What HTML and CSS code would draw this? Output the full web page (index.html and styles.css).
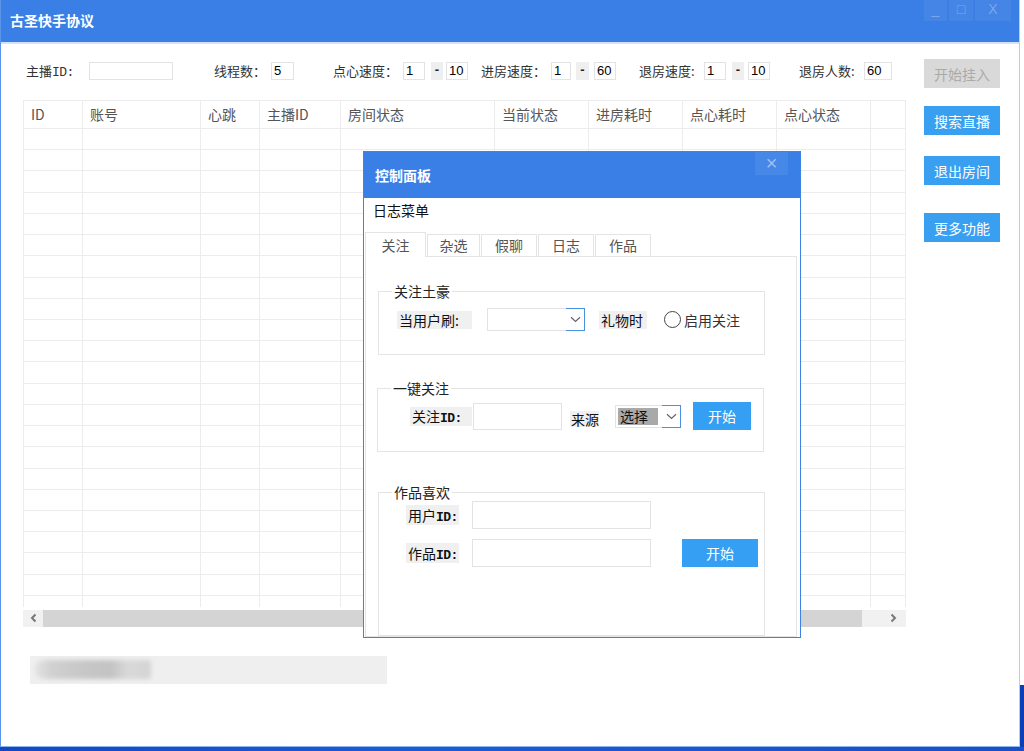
FILE: index.html
```html
<!DOCTYPE html>
<html lang="zh-CN">
<head>
<meta charset="utf-8">
<title>古圣快手协议</title>
<link rel="stylesheet" href="styles.css">
</head>
<body>
<div class="desktop">
  <div class="window">
    <div class="titlebar">
      <span class="title">古圣快手协议</span>
      <div class="wctrls">
        <span class="wbtn wmin">_</span>
        <span class="wbtn wmax">□</span>
        <span class="wbtn wclose">X</span>
      </div>
    </div>

    <div class="toolbar">
      <span class="tlabel l-anchor">主播<span class="mono thin">ID:</span></span>
      <span class="tin in-anchor"></span>
      <span class="tlabel l-thread">线程数：</span>
      <span class="tin in-thread">5</span>
      <span class="tlabel l-snack">点心速度：</span>
      <span class="tin in-a">1</span>
      <span class="dash d-a">-</span>
      <span class="tin in-b">10</span>
      <span class="tlabel l-enter">进房速度：</span>
      <span class="tin in-c">1</span>
      <span class="dash d-b">-</span>
      <span class="tin in-d">60</span>
      <span class="tlabel l-exit">退房速度:</span>
      <span class="tin in-e">1</span>
      <span class="dash d-c">-</span>
      <span class="tin in-f">10</span>
      <span class="tlabel l-count">退房人数:</span>
      <span class="tin in-g">60</span>
      <button class="startbtn" disabled>开始挂入</button>
    </div>

    <div class="main">
      <div class="left">
        <div class="grid">
          <div class="row head"><span>ID</span><span>账号</span><span>心跳</span><span>主播ID</span><span>房间状态</span><span>当前状态</span><span>进房耗时</span><span>点心耗时</span><span>点心状态</span><span></span></div>
          <div class="row"><span></span><span></span><span></span><span></span><span></span><span></span><span></span><span></span><span></span><span></span></div>
          <div class="row"><span></span><span></span><span></span><span></span><span></span><span></span><span></span><span></span><span></span><span></span></div>
          <div class="row"><span></span><span></span><span></span><span></span><span></span><span></span><span></span><span></span><span></span><span></span></div>
          <div class="row"><span></span><span></span><span></span><span></span><span></span><span></span><span></span><span></span><span></span><span></span></div>
          <div class="row"><span></span><span></span><span></span><span></span><span></span><span></span><span></span><span></span><span></span><span></span></div>
          <div class="row"><span></span><span></span><span></span><span></span><span></span><span></span><span></span><span></span><span></span><span></span></div>
          <div class="row"><span></span><span></span><span></span><span></span><span></span><span></span><span></span><span></span><span></span><span></span></div>
          <div class="row"><span></span><span></span><span></span><span></span><span></span><span></span><span></span><span></span><span></span><span></span></div>
          <div class="row"><span></span><span></span><span></span><span></span><span></span><span></span><span></span><span></span><span></span><span></span></div>
          <div class="row"><span></span><span></span><span></span><span></span><span></span><span></span><span></span><span></span><span></span><span></span></div>
          <div class="row"><span></span><span></span><span></span><span></span><span></span><span></span><span></span><span></span><span></span><span></span></div>
          <div class="row"><span></span><span></span><span></span><span></span><span></span><span></span><span></span><span></span><span></span><span></span></div>
          <div class="row"><span></span><span></span><span></span><span></span><span></span><span></span><span></span><span></span><span></span><span></span></div>
          <div class="row"><span></span><span></span><span></span><span></span><span></span><span></span><span></span><span></span><span></span><span></span></div>
          <div class="row"><span></span><span></span><span></span><span></span><span></span><span></span><span></span><span></span><span></span><span></span></div>
          <div class="row"><span></span><span></span><span></span><span></span><span></span><span></span><span></span><span></span><span></span><span></span></div>
          <div class="row"><span></span><span></span><span></span><span></span><span></span><span></span><span></span><span></span><span></span><span></span></div>
          <div class="row"><span></span><span></span><span></span><span></span><span></span><span></span><span></span><span></span><span></span><span></span></div>
          <div class="row"><span></span><span></span><span></span><span></span><span></span><span></span><span></span><span></span><span></span><span></span></div>
          <div class="row"><span></span><span></span><span></span><span></span><span></span><span></span><span></span><span></span><span></span><span></span></div>
          <div class="row"><span></span><span></span><span></span><span></span><span></span><span></span><span></span><span></span><span></span><span></span></div>
          <div class="row"><span></span><span></span><span></span><span></span><span></span><span></span><span></span><span></span><span></span><span></span></div>
          <div class="row last"><span></span><span></span><span></span><span></span><span></span><span></span><span></span><span></span><span></span><span></span></div>
        </div>
        <div class="hscroll">
          <span class="sb-arrow sb-left"><svg width="7" height="10" viewBox="0 0 7 10"><path d="M5.5 1.5 L2 5 L5.5 8.5" fill="none" stroke="#777" stroke-width="2"/></svg></span>
          <span class="sb-thumb"></span>
          <span class="sb-arrow sb-right"><svg width="7" height="10" viewBox="0 0 7 10"><path d="M1.5 1.5 L5 5 L1.5 8.5" fill="none" stroke="#777" stroke-width="2"/></svg></span>
        </div>
        <div class="status"><span class="status-blur"></span></div>
      </div>
      <div class="side">
        <button class="sbtn">搜索直播</button>
        <button class="sbtn">退出房间</button>
        <button class="sbtn more">更多功能</button>
      </div>
    </div>

    <div class="dialog">
      <div class="dlg-title">
        <span class="dlg-text">控制面板</span>
        <span class="dlg-close">×</span>
      </div>
      <div class="dlg-body">
        <div class="menu">日志菜单</div>
        <div class="tabs">
          <span class="tab active">关注</span>
          <span class="tab">杂选</span>
          <span class="tab">假聊</span>
          <span class="tab">日志</span>
          <span class="tab">作品</span>
        </div>
        <div class="panel">
          <fieldset class="grp g1">
            <legend>关注土豪</legend>
            <div class="frow r1">
              <span class="lbl l-user">当用户刷:</span>
              <span class="combo c1"><span class="combo-val"></span><span class="combo-btn"><svg width="11" height="7" viewBox="0 0 11 7"><path d="M1 1.2 L5.5 5.5 L10 1.2" fill="none" stroke="#666" stroke-width="1.2"/></svg></span></span>
              <span class="lbl l-gift">礼物时</span>
              <span class="radio"></span>
              <span class="rtext">启用关注</span>
            </div>
          </fieldset>
          <fieldset class="grp g2">
            <legend>一键关注</legend>
            <div class="frow r2">
              <span class="lbl l-fid">关注<span class="mono">ID:</span></span>
              <span class="dinput i-fid"></span>
              <span class="lbl l-src">来源</span>
              <span class="combo c2"><span class="combo-sel">选择</span><span class="combo-btn"><svg width="11" height="7" viewBox="0 0 11 7"><path d="M1 1.2 L5.5 5.5 L10 1.2" fill="none" stroke="#666" stroke-width="1.2"/></svg></span></span>
              <button class="bbtn b-follow">开始</button>
            </div>
          </fieldset>
          <fieldset class="grp g3">
            <legend>作品喜欢</legend>
            <div class="frow r3">
              <span class="lbl l-uid">用户<span class="mono">ID:</span></span>
              <span class="dinput i-wide"></span>
            </div>
            <div class="frow r3 r3b">
              <span class="lbl l-uid">作品<span class="mono">ID:</span></span>
              <span class="dinput i-wide"></span>
              <button class="bbtn b-like">开始</button>
            </div>
          </fieldset>
        </div>
      </div>
    </div>
  </div>
  <div class="taskbar"></div>
</div>
</body>
</html>
```
FILE: styles.css
```css
* { box-sizing: border-box; }
html, body { margin: 0; padding: 0; }
body {
  width: 1024px; height: 751px; overflow: hidden;
  font-family: "Noto Sans CJK SC", "Noto Sans", sans-serif;
  font-size: 14px; color: #222; background: #fff;
}
button { font-family: inherit; border: none; padding: 0; margin: 0; cursor: default; }
.mono { font-family: "Liberation Mono", "Noto Sans CJK SC", monospace; font-weight: 700; font-size: 13px; letter-spacing: -0.5px; }
.mono.thin { font-weight: 400; }

.desktop {
  width: 1024px; height: 751px; display: flex; flex-direction: column;
  background: linear-gradient(to bottom, #ffffff 0, #ffffff 685px, #0c3fb5 685px);
}
.window {
  position: relative; width: 1020px; height: 747px; flex: none;
  background: #fff;
  border-left: 1px solid #5a95ea; border-right: 1px solid #b3cdf3; border-bottom: 1px solid #8fb5ee;
  display: flex; flex-direction: column;
}
.taskbar { height: 4px; flex: none; background: linear-gradient(to right, #1547c4, #1d5bd6 40%, #1a4fc8); }

/* title bar */
.titlebar {
  height: 44px; flex: none; background: #3a7fe5; border-bottom: 2px solid #d3e2f8;
  display: flex; align-items: flex-start; padding-left: 9px;
}
.title { color: #fff; font-size: 14px; font-weight: 700; line-height: 40px; }
.wctrls { margin-left: auto; margin-right: 8px; display: flex; gap: 2px; }
.wbtn {
  height: 21px; background: rgba(255,255,255,0.05); color: rgba(255,255,255,0.3);
  font-family: "Liberation Sans", sans-serif; font-size: 14px; line-height: 19px; text-align: center;
}
.wmin { width: 23px; }
.wmax { width: 24px; }
.wclose { width: 36px; }

/* toolbar */
.toolbar {
  display: flex; align-items: flex-start; height: 29px; flex: none;
  margin-top: 15px; padding-left: 25px; font-size: 13px; color: #333;
}
.tlabel { margin-top: 2px; line-height: 20px; white-space: nowrap; flex: none; }
.tin {
  flex: none; margin-top: 3px; height: 18px; border: 1px solid #e3e3e3; background: #fff;
  font-family: "Liberation Sans", sans-serif; font-size: 13px; line-height: 16px; padding-left: 2px; color: #000;
}
.dash {
  flex: none; margin-top: 3px; height: 18px; background: #efefef; text-align: center;
  font-family: "Liberation Sans", sans-serif; line-height: 16px; font-weight: 700; color: #222;
}
.l-anchor { width: 63px; }
.in-anchor { width: 84px; }
.l-thread { width: 57px; margin-left: 41px; }
.in-thread { width: 23px; }
.l-snack { width: 70px; margin-left: 39px; }
.in-a { width: 22px; }
.d-a { width: 12px; margin-left: 6px; }
.in-b { width: 22px; margin-left: 3px; }
.l-enter { width: 70px; margin-left: 13px; }
.in-c { width: 20px; }
.d-b { width: 13px; margin-left: 5px; }
.in-d { width: 22px; margin-left: 5px; }
.l-exit { width: 65px; margin-left: 23px; }
.in-e { width: 22px; }
.d-c { width: 12px; margin-left: 6px; }
.in-f { width: 22px; margin-left: 4px; }
.l-count { width: 65px; margin-left: 29px; }
.in-g { width: 28px; }
.startbtn {
  flex: none; margin-left: 32px; width: 76px; height: 29px;
  background: #d9d9d9; color: #aaaaaa; font-size: 14px;
}

/* main area */
.main { display: flex; margin-top: 12px; padding-left: 22px; }
.left { width: 883px; flex: none; display: flex; flex-direction: column; }
.grid { border-top: 1px solid #ececec; border-left: 1px solid #ececec; }
.row {
  display: grid; height: 21.23px;
  grid-template-columns: 59px 118px 59px 81px 154px 94px 94px 94px 94px 35px;
}
.row > span { border-right: 1px solid #ececec; border-bottom: 1px solid #ececec; }
.row.head { height: 28px; }
.row.head > span { padding-left: 7px; line-height: 26px; color: #555; font-size: 14px; white-space: nowrap; }
.row.last { height: 11px; }
.row.last > span { border-bottom: none; }

.hscroll { display: flex; height: 17px; margin-top: 3px; width: 883px; }
.sb-arrow { background: #f1f1f1; display: flex; align-items: center; }
.sb-left { width: 20px; justify-content: center; }
.sb-thumb { width: 819px; background: #d4d4d4; }
.sb-right { width: 44px; justify-content: flex-end; padding-right: 9px; }

.status {
  margin-top: 29px; margin-left: 7px; width: 357px; height: 28px; background: #efefef;
  padding: 4px 0 0 5px;
}
.status-blur {
  display: block; width: 116px; height: 19px; border-radius: 9px 3px 3px 9px;
  background: linear-gradient(to right, #e2e2e2 0, #d0d0d0 15%, #c6c6c6 45%, #c3c3c3 65%, #d9d9d9 80%, #d4d4d4 100%);
  filter: blur(2px);
}

.side { margin-left: 18px; padding-top: 6px; display: flex; flex-direction: column; }
.sbtn { width: 76px; height: 29px; background: #39a0f1; color: #fff; font-size: 14px; }
.sbtn + .sbtn { margin-top: 21px; }
.sbtn.more { margin-top: 28px; }

/* dialog */
.dialog {
  position: absolute; left: 362px; top: 151px; width: 438px; height: 487px;
  border: 1px solid #3d82e6; background: #fff; display: flex; flex-direction: column;
}
.dlg-title {
  height: 46px; flex: none; background: #3a7fe5; display: flex; align-items: flex-start; padding-left: 11px;
}
.dlg-text { color: #fff; font-size: 14px; font-weight: 700; line-height: 46px; }
.dlg-close {
  margin-left: auto; margin-right: 12px; width: 33px; height: 23px; background: #4688e8;
  color: #9dc0f3; text-align: center; line-height: 22px; font-size: 20px; font-family: "Liberation Sans", sans-serif;
}
.dlg-body { flex: 1; display: flex; flex-direction: column; padding: 0 3px 0 1px; min-height: 0; }
.menu { line-height: 24px; padding-left: 8px; color: #111; flex: none; }
.tabs { display: flex; align-items: flex-end; margin-top: 10px; height: 24px; flex: none; position: relative; z-index: 1; }
.tab {
  height: 22px; border: 1px solid #e4e4e4; border-bottom: none; color: #555; text-align: center;
  line-height: 20px; margin-left: 1px; background: #fff; flex: none;
}
.tab.active { height: 25px; margin-left: 0; margin-bottom: -1px; line-height: 24px; }
.tab:nth-child(1) { width: 61px; }
.tab:nth-child(2) { width: 53px; }
.tab:nth-child(3) { width: 56px; }
.tab:nth-child(4) { width: 56px; }
.tab:nth-child(5) { width: 56px; }
.panel { flex: 1; border: 1px solid #e4e4e4; overflow: hidden; min-height: 0; }

.grp { border: 1px solid #e4e4e4; margin: 0; min-width: 0; width: 387px; }
.grp legend { padding: 0 2px; margin-left: 13px; line-height: 16px; font-size: 14px; color: #222; }
.g1 { margin: 26px 0 0 12px; padding: 9px 0 23px; }
.g2 { margin: 25px 0 0 11px; padding: 6px 0 21px; }
.g3 { margin: 32px 0 0 12px; padding: 1px 0 68px; }

.frow { display: flex; align-items: center; }
.lbl { background: #f0f0f0; height: 18px; line-height: 18px; padding-left: 2px; color: #111; font-size: 14px; flex: none; white-space: nowrap; }
.r1 { height: 23px; margin-left: 18px; }
.l-user { width: 75px; }
.combo { display: flex; height: 23px; border: 1px solid #e3e3e3; background: #fff; flex: none; }
.c1 { width: 98px; margin-left: 15px; }
.combo-btn {
  margin: -1px -1px -1px auto; width: 19px; height: 23px;
  border: 1px solid #4a90e2; border-left: none;
  display: flex; align-items: center; justify-content: center;
}
.l-gift { width: 48px; margin-left: 14px; }
.radio { width: 17px; height: 17px; border: 1.5px solid #444; border-radius: 50%; margin-left: 17px; flex: none; }
.rtext { margin-left: 3px; color: #333; }

.r2 { height: 28px; margin-left: 32px; }
.l-fid { width: 62px; height: 19px; }
.dinput { border: 1px solid #e3e3e3; background: #fff; flex: none; }
.i-fid { width: 89px; height: 27px; margin-left: 1px; }
.l-src { width: 29px; margin-left: 8px; height: 16px; line-height: 16px; margin-top: 6px; padding-left: 1px; }
.c2 { width: 66px; margin-left: 16px; }
.combo-sel { background: #a9a9a9; color: #111; width: 40px; margin: 2px 0 2px 2px; line-height: 17px; padding-left: 2px; }
.bbtn { background: #35a0f3; color: #fff; font-size: 14px; height: 28px; flex: none; }
.b-follow { width: 58px; margin-left: 12px; }

.r3 { height: 28px; margin-left: 27px; }
.r3b { margin-top: 10px; }
.l-uid { width: 53px; height: 20px; line-height: 20px; }
.i-wide { width: 179px; height: 28px; margin-left: 13px; }
.b-like { width: 76px; margin-left: 31px; }
```
